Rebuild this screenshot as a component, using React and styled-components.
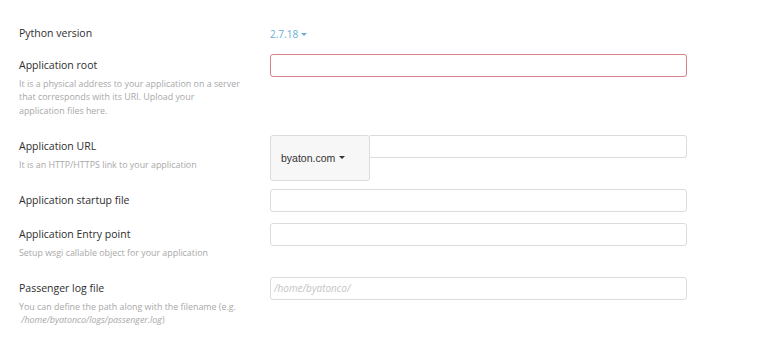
import styled, { createGlobalStyle } from "styled-components";

const GlobalStyle = createGlobalStyle`
    body {
        margin: 0;
        background: #fff;
        font-family: "Open Sans", "Liberation Sans", sans-serif;
    }
`;

const fields = [
    {
        label: "Application root",
        invalid: true,
        desc: (
            <>
                It is a physical address to your application on a server
                <br />
                that corresponds with its URI. Upload your
                <br />
                application files here.
            </>
        ),
    },
    { label: "Application URL", desc: "It is an HTTP/HTTPS link to your application", domain: "byaton.com" },
    { label: "Application startup file" },
    { label: "Application Entry point", desc: "Setup wsgi callable object for your application" },
    {
        label: "Passenger log file",
        placeholder: "/home/byatonco/",
        desc: (
            <>
                You can define the path along with the filename (e.g.
                <br />
                &nbsp;<em>/home/byatonco/logs/passenger.log</em>)
            </>
        ),
    },
];

function Caret() {
    return <CaretStyled viewBox="0 0 8 4"><path d="M0 0h8L4 4z" /></CaretStyled>;
}

export default function App() {
    return (
        <PageStyled>
            <GlobalStyle />
            <RowStyled>
                <LabelCell><Label>Python version</Label></LabelCell>
                <Version>2.7.18 <Caret /></Version>
            </RowStyled>

            {fields.map((f) => (
                <RowStyled key={f.label}>
                    <LabelCell>
                        <Label>{f.label}</Label>
                        {f.desc && <Desc>{f.desc}</Desc>}
                    </LabelCell>
                    {f.domain ? (
                        <InputGroup>
                            <DomainButton>{f.domain} <Caret /></DomainButton>
                            <TextInput $joined />
                        </InputGroup>
                    ) : (
                        <TextInput $invalid={f.invalid} placeholder={f.placeholder} />
                    )}
                </RowStyled>
            ))}
        </PageStyled>
    );
}

const PageStyled = styled.div`
    padding: 21.5px 0 0 19px;
`;

const RowStyled = styled.div`
    display: grid;
    grid-template-columns: 251px 417px;
    align-items: start;
    margin-bottom: 11px;
`;

const LabelCell = styled.div`
    display: flex;
    flex-direction: column;
`;

const Label = styled.div`
    padding-top: 4px;
    font-size: 10.5px;
    line-height: 15px;
    color: #2e2e2e;
`;

const Desc = styled.div`
    margin-top: 4px;
    padding-bottom: 6.5px;
    width: 240px;
    font-size: 8.9px;
    line-height: 13.5px;
    color: #a8a8a8;

    em {
        font-style: italic;
    }
`;

const Version = styled.div`
    padding-top: 4px;
    height: 17px;
    font-size: 10px;
    line-height: 15px;
    color: #6aaed6;
    display: flex;
    align-items: center;
    gap: 3px;
`;

const CaretStyled = styled.svg`
    width: 6px;
    height: 3px;
    fill: currentColor;
`;

const InputGroup = styled.div`
    display: flex;
    align-items: flex-start;
    height: 23px;
`;

const DomainButton = styled.div`
    flex: 0 0 100px;
    box-sizing: border-box;
    height: 46px;
    padding-left: 10px;
    display: flex;
    align-items: center;
    gap: 4px;
    background: #f7f7f7;
    border: 1px solid #dcdcdc;
    border-radius: 3px;
    font-family: "Liberation Sans", Arial, sans-serif;
    font-size: 10.5px;
    color: #333;
`;

const TextInput = styled.input`
    box-sizing: border-box;
    display: block;
    width: 100%;
    height: 23px;
    margin: 0;
    padding: 0 3px;
    border: 1px solid ${(p) => (p.$invalid ? "#d98088" : "#dcdcdc")};
    border-radius: ${(p) => (p.$joined ? "0 3px 3px 0" : "3px")};
    border-left-width: ${(p) => (p.$joined ? "0" : "1px")};
    background: #fff;
    outline: none;
    font-family: "Open Sans", sans-serif;
    font-size: 10px;
    color: #333;

    &::placeholder {
        color: #c4c4c4;
        font-style: italic;
    }
`;
